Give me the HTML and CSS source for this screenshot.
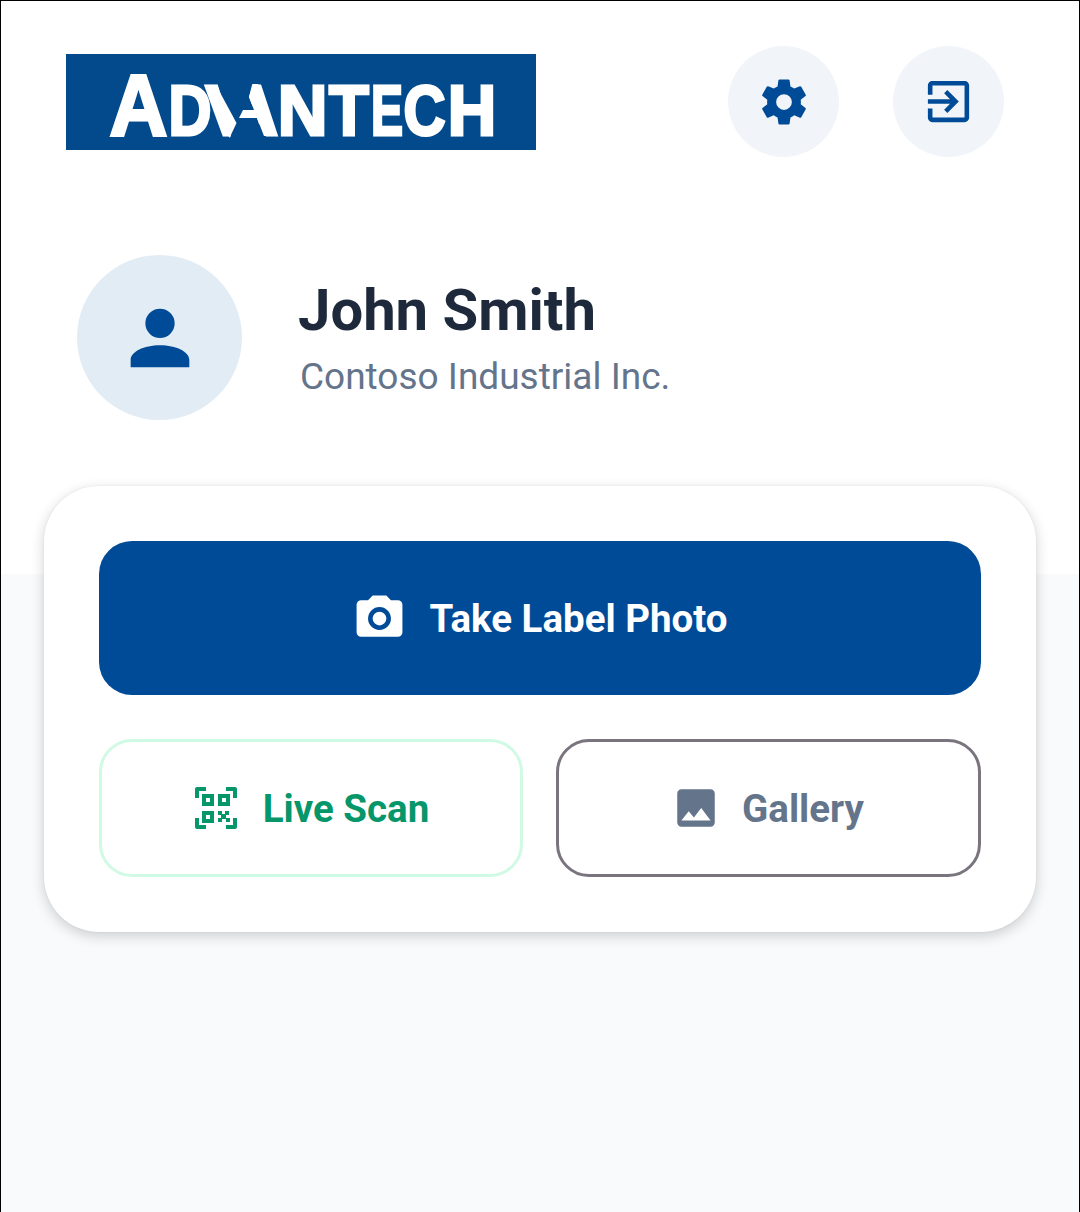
FILE: index.html
```html
<!DOCTYPE html>
<html lang="en">
<head>
<meta charset="utf-8">
<title>Advantech</title>
<link rel="stylesheet" href="styles.css">
</head>
<body>
<div class="app">
  <header class="topbar">
    <svg class="logo" viewBox="0 0 470 96" role="img" aria-label="Advantech">
      <rect class="logo-bg" width="470" height="96"/>
      <text class="logo-text" y="80.5"><tspan x="43.5" font-size="88" textLength="58" lengthAdjust="spacingAndGlyphs">A</tspan><tspan x="102.5" textLength="43" lengthAdjust="spacingAndGlyphs">D</tspan><tspan x="139.5" textLength="47" lengthAdjust="spacingAndGlyphs">V</tspan><tspan x="165" textLength="47" lengthAdjust="spacingAndGlyphs">A</tspan><tspan x="211.7" textLength="49.7" lengthAdjust="spacingAndGlyphs">N</tspan><tspan x="263" textLength="39.8" lengthAdjust="spacingAndGlyphs">T</tspan><tspan x="305" textLength="32" lengthAdjust="spacingAndGlyphs">E</tspan><tspan x="337.6" textLength="42" lengthAdjust="spacingAndGlyphs">C</tspan><tspan x="381.8" textLength="48.5" lengthAdjust="spacingAndGlyphs">H</tspan></text>
      <path class="logo-cut" d="M151 27 L187 27 L183 43 L188 56 L191 64 L198 85 L165 85 L164 67 Z"/>
      <path class="logo-bar" d="M150 31 L170.5 69 L163.5 84 L156 70 Z"/>
      <path class="logo-bar" d="M187 30 L192 30 L210 82 L198 82 L191 64 L173 64 L177 56 L188 56 L183 43 Z"/>
    </svg>
    <div class="actions">
      <button class="round-btn" aria-label="Settings">
        <svg class="icon-gear" viewBox="0 0 24 24"><path d="M12,15.5A3.5,3.5 0 0,1 8.5,12A3.5,3.5 0 0,1 12,8.5A3.5,3.5 0 0,1 15.5,12A3.5,3.5 0 0,1 12,15.5M19.43,12.97C19.47,12.65 19.5,12.33 19.5,12C19.5,11.67 19.47,11.34 19.43,11L21.54,9.37C21.73,9.22 21.78,8.95 21.66,8.73L19.66,5.27C19.54,5.05 19.27,4.96 19.05,5.05L16.56,6.05C16.04,5.66 15.5,5.32 14.87,5.07L14.5,2.42C14.46,2.18 14.25,2 14,2H10C9.75,2 9.54,2.18 9.5,2.42L9.13,5.07C8.5,5.32 7.96,5.66 7.44,6.05L4.95,5.05C4.73,4.96 4.46,5.05 4.34,5.27L2.34,8.73C2.21,8.95 2.27,9.22 2.46,9.37L4.57,11C4.53,11.34 4.5,11.67 4.5,12C4.5,12.33 4.53,12.65 4.57,12.97L2.46,14.63C2.27,14.78 2.21,15.05 2.34,15.27L4.34,18.73C4.46,18.95 4.73,19.03 4.95,18.95L7.44,17.94C7.96,18.34 8.5,18.68 9.13,18.93L9.5,21.58C9.54,21.82 9.75,22 10,22H14C14.25,22 14.46,21.82 14.5,21.58L14.87,18.93C15.5,18.67 16.04,18.34 16.56,17.94L19.05,18.95C19.27,19.03 19.54,18.95 19.66,18.73L21.66,15.27C21.78,15.05 21.73,14.78 21.54,14.63L19.43,12.97Z"/></svg>
      </button>
      <button class="round-btn" aria-label="Sign out">
        <svg class="icon-55" viewBox="0 0 24 24"><path d="M10.09 15.59L11.5 17l5-5-5-5-1.41 1.41L12.67 11H3v2h9.67l-2.58 2.59zM19 3H5c-1.11 0-2 .9-2 2v4h2V5h14v14H5v-4H3v4c0 1.1.89 2 2 2h14c1.1 0 2-.9 2-2V5c0-1.1-.9-2-2-2z"/></svg>
      </button>
    </div>
  </header>

  <section class="profile">
    <div class="avatar">
      <svg class="icon-88" viewBox="0 0 24 24"><path d="M12,4A4,4 0 0,1 16,8A4,4 0 0,1 12,12A4,4 0 0,1 8,8A4,4 0 0,1 12,4M12,14C16.42,14 20,15.79 20,18V20H4V18C4,15.79 7.58,14 12,14Z"/></svg>
    </div>
    <div class="who">
      <h1 class="name">John Smith</h1>
      <p class="company">Contoso Industrial Inc.</p>
    </div>
  </section>

  <main class="card">
    <button class="primary">
      <svg class="icon-cam" viewBox="0 0 24 24"><path d="M4,4H7L9,2H15L17,4H20A2,2 0 0,1 22,6V18A2,2 0 0,1 20,20H4A2,2 0 0,1 2,18V6A2,2 0 0,1 4,4M12,7A5,5 0 0,0 7,12A5,5 0 0,0 12,17A5,5 0 0,0 17,12A5,5 0 0,0 12,7M12,9A3,3 0 0,1 15,12A3,3 0 0,1 12,15A3,3 0 0,1 9,12A3,3 0 0,1 12,9Z"/></svg>
      <span>Take Label Photo</span>
    </button>
    <div class="secondary-row">
      <button class="secondary scan">
        <svg class="icon-qr" viewBox="0 0 42 42">
          <path d="M0 11V2a2 2 0 0 1 2-2h9v4H4v7zM31 0h9a2 2 0 0 1 2 2v9h-4V4h-7zM0 31h4v7h7v4H2a2 2 0 0 1-2-2zM38 31h4v9a2 2 0 0 1-2 2h-9v-4h7z"/>
          <path fill-rule="evenodd" d="M7 7h12v12H7zM11 11v4h4v-4zM23 7h12v12H23zM27 11v4h4v-4zM7 24h12v12H7zM11 28v4h4v-4z"/>
          <path d="M23 24h4v4h-4zM30 24h4v4h-4zM26 27h5v5h-5zM23 31h4v4h-4zM31 31h4v4h-4z"/>
        </svg>
        <span>Live Scan</span>
      </button>
      <button class="secondary gallery">
        <svg class="icon-50" viewBox="0 0 24 24"><path d="M8.5,13.5L11,16.5L14.5,12L19,18H5M21,19V5C21,3.89 20.1,3 19,3H5A2,2 0 0,0 3,5V19A2,2 0 0,0 5,21H19A2,2 0 0,0 21,19Z"/></svg>
        <span>Gallery</span>
      </button>
    </div>
  </main>
</div>
</body>
</html>
```
FILE: styles.css
```css
* { box-sizing: border-box; }
html, body { margin: 0; padding: 0; }
body { font-family: Roboto, "Noto Sans", sans-serif; }

.app {
  width: 1080px;
  height: 1212px;
  border-top: 1px solid #000;
  border-left: 1px solid #000;
  border-right: 1px solid #000;
  overflow: hidden;
  background: linear-gradient(#fff 573px, #f8fafc 573px);
}

.topbar {
  display: flex;
  justify-content: space-between;
  align-items: flex-start;
  padding: 45px 75px 0 65px;
}
.logo { display: block; width: 470px; height: 96px; margin-top: 8px; }
.logo-bg, .logo-cut { fill: #024a8c; }
.logo-bar { fill: #fff; }
.logo-text {
  fill: #fff;
  stroke: #fff;
  stroke-width: 3px;
  font-family: "Liberation Sans", sans-serif;
  font-weight: 700;
  font-size: 70px;
}

.actions { display: flex; gap: 54px; }
.round-btn {
  width: 111px;
  height: 111px;
  border: 0;
  padding: 0;
  border-radius: 50%;
  background: #f1f5f9;
  display: flex;
  align-items: center;
  justify-content: center;
}
svg { display: block; }
.icon-55 { width: 55px; height: 55px; fill: #004b98; }
.icon-gear { width: 54px; height: 54px; fill: #004b98; }
.icon-88 { width: 88px; height: 88px; fill: #004b98; }
.icon-cam { width: 55px; height: 55px; fill: #fff; }
.icon-50 { width: 50px; height: 50px; fill: #64748b; }
.icon-qr { width: 42px; height: 42px; fill: #059669; }

.profile {
  display: flex;
  align-items: center;
  gap: 56px;
  padding-left: 76px;
  margin-top: 98px;
}
.avatar {
  width: 165px;
  height: 165px;
  border-radius: 50%;
  background: #e2ecf4;
  display: flex;
  align-items: center;
  justify-content: center;
}
.name {
  margin: 0 0 9px;
  font-size: 58px;
  line-height: 70px;
  font-weight: 700;
  color: #1e293b;
}
.company {
  margin: 0;
  font-size: 37px;
  line-height: 46px;
  color: #64748b;
  padding-left: 2px;
}

.card {
  margin: 66px 0 0 43px;
  width: 992px;
  height: 446px;
  padding: 55px;
  border-radius: 55px;
  background: #fff;
  box-shadow: 0 4px 14px rgba(0, 0, 0, 0.18), 0 0 2px rgba(0, 0, 0, 0.08);
  display: flex;
  flex-direction: column;
  gap: 44px;
}
.primary, .secondary {
  font-family: inherit;
  font-weight: 700;
  font-size: 38.5px;
  display: flex;
  align-items: center;
  justify-content: center;
  padding: 0;
}
.primary {
  height: 154px;
  border: 0;
  border-radius: 33px;
  background: #004b98;
  color: #fff;
  gap: 22px;
}
.secondary-row {
  display: grid;
  grid-template-columns: 424px 1fr;
  gap: 33px;
}
.secondary {
  height: 138px;
  border-radius: 33px;
  background: #fff;
}
.scan { border: 3px solid #d1fae5; color: #059669; gap: 26px; padding-left: 2px; }
.gallery { border: 3px solid #79747e; color: #64748b; gap: 21px; padding-right: 2px; }
```
